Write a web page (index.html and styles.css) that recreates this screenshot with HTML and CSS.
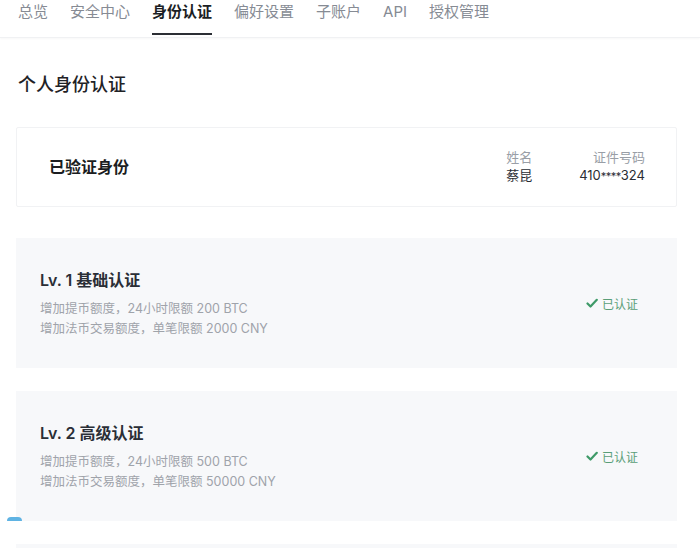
FILE: index.html
```html
<!DOCTYPE html>
<html lang="zh-CN">
<head>
<meta charset="utf-8">
<title>身份认证</title>
<link rel="stylesheet" href="styles.css">
</head>
<body>
<nav class="tabs">
  <a class="tab">总览</a>
  <a class="tab">安全中心</a>
  <a class="tab active">身份认证</a>
  <a class="tab">偏好设置</a>
  <a class="tab">子账户</a>
  <a class="tab">API</a>
  <a class="tab">授权管理</a>
</nav>
<main class="content">
  <h1 class="page-title">个人身份认证</h1>
  <section class="card identity">
    <div class="identity-title">已验证身份</div>
    <div class="identity-info">
      <div class="info-col">
        <div class="info-label">姓名</div>
        <div class="info-value">蔡昆</div>
      </div>
      <div class="info-col right">
        <div class="info-label">证件号码</div>
        <div class="info-value">410<span class="mask">****</span>324</div>
      </div>
    </div>
  </section>
  <section class="card level">
    <div class="level-text">
      <div class="level-title">Lv. 1 基础认证</div>
      <div class="level-desc">增加提币额度，24小时限额 200 BTC</div>
      <div class="level-desc">增加法币交易额度，单笔限额 2000 CNY</div>
    </div>
    <div class="status">
      <svg class="check" viewBox="0 0 12 12" width="12" height="12"><path d="M1.5 6.5l3 3L10.8 2.8" fill="none" stroke="#3e9a68" stroke-width="2.2" stroke-linecap="round" stroke-linejoin="round"/></svg>
      <span>已认证</span>
    </div>
  </section>
  <section class="card level">
    <div class="level-text">
      <div class="level-title">Lv. 2 高级认证</div>
      <div class="level-desc">增加提币额度，24小时限额 500 BTC</div>
      <div class="level-desc">增加法币交易额度，单笔限额 50000 CNY</div>
    </div>
    <div class="status">
      <svg class="check" viewBox="0 0 12 12" width="12" height="12"><path d="M1.5 6.5l3 3L10.8 2.8" fill="none" stroke="#3e9a68" stroke-width="2.2" stroke-linecap="round" stroke-linejoin="round"/></svg>
      <span>已认证</span>
    </div>
  </section>
  <section class="card level-stub"></section>
</main>
<div class="float-dot"></div>
</body>
</html>
```

FILE: styles.css
```css
html, body {
  margin: 0;
  padding: 0;
  background: #ffffff;
  font-family: "Inter", "Noto Sans CJK SC", sans-serif;
  color: #1f2329;
}

.tabs {
  display: flex;
  gap: 22px;
  padding: 0 0 0 18px;
  height: 37px;
  border-bottom: 1px solid #f0f1f3;
  box-shadow: 0 1px 2px rgba(0, 0, 0, 0.03);
}

.tab {
  font-size: 15px;
  line-height: 24px;
  height: 35px;
  color: #868b94;
  box-sizing: border-box;
  border-bottom: 2px solid transparent;
  cursor: pointer;
}

.tab.active {
  color: #1b1e24;
  font-weight: 600;
  border-bottom-color: #2b2e34;
}

.content {
  padding: 0 23px 0 16px;
}

.page-title {
  margin: 34px 0 29px 2px;
  font-size: 18px;
  line-height: 26px;
  font-weight: 500;
  color: #1f2226;
}

.card {
  box-sizing: border-box;
}

.identity {
  height: 80px;
  border: 1px solid #f1f2f4;
  border-radius: 2px;
  display: flex;
  align-items: center;
  justify-content: space-between;
  padding: 0 31px 0 32px;
  margin-bottom: 31px;
}

.identity-title {
  font-size: 16px;
  font-weight: 600;
  color: #1b1d21;
  margin-top: -2px;
}

.identity-info {
  display: flex;
  gap: 47px;
  margin-top: -2px;
}

.info-col {
  font-size: 13px;
  line-height: 18px;
}

.info-col.right {
  text-align: right;
}

.info-label {
  color: #999ea6;
}

.info-value {
  color: #2a2d33;
}

.mask {
  font-size: 11px;
  letter-spacing: -0.5px;
}

.level {
  background: #f7f8fa;
  height: 130px;
  display: flex;
  align-items: center;
  justify-content: space-between;
  padding: 0 39px 0 24px;
  margin-bottom: 23px;
}

.level-stub {
  background: #f7f8fa;
  height: 20px;
}

.level-title {
  font-size: 16px;
  line-height: 24px;
  font-weight: 600;
  color: #2a2e36;
  margin-bottom: 7px;
}

.level-desc {
  font-size: 12.5px;
  line-height: 20px;
  color: #9fa3aa;
}

.status {
  display: flex;
  align-items: center;
  gap: 4px;
  font-size: 12px;
  color: #5a9e78;
}

.check {
  display: block;
}

.float-dot {
  position: absolute;
  left: 7px;
  top: 517px;
  width: 15px;
  height: 4px;
  border-radius: 8px 8px 0 0;
  background: #5fb3e3;
}
```
